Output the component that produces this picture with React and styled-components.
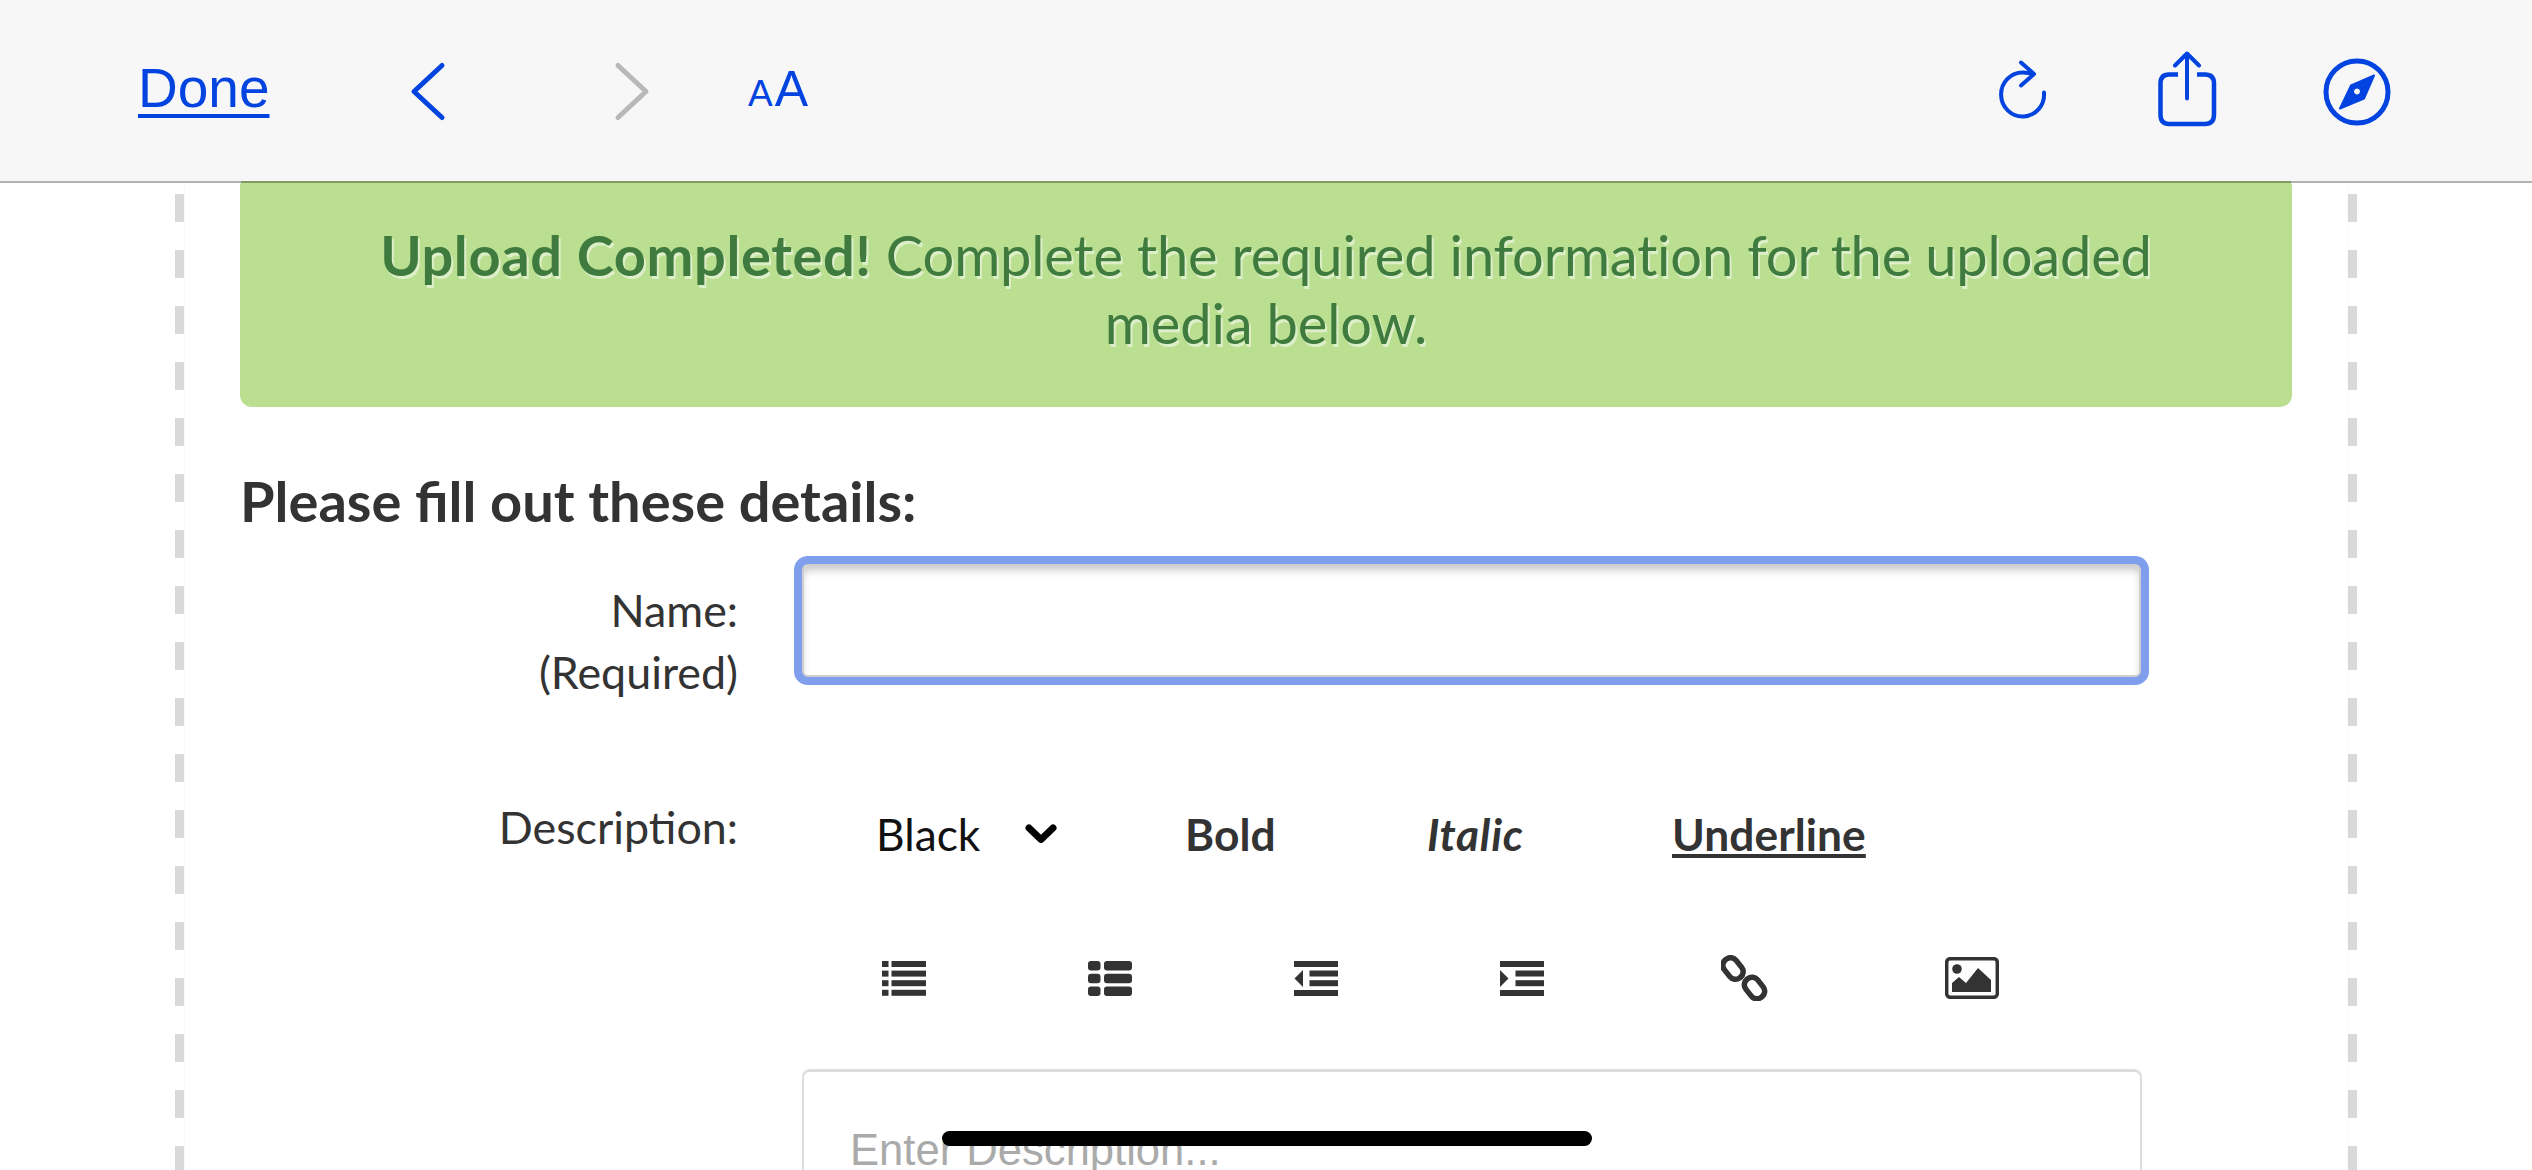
import React from "react";
import styled, { createGlobalStyle } from "styled-components";

const Global = createGlobalStyle`
  html, body { margin: 0; padding: 0; background: #fff; }
  * { box-sizing: border-box; }
`;
const BLUE = "#0343e0";
const Screen = styled.div`
  width: 2532px; height: 1170px; overflow: hidden; position: relative; background: #fff;
  font-family: Lato, "Liberation Sans", sans-serif; color: #333;
`;
const Toolbar = styled.header`
  height: 181px; background: #f7f7f7; display: flex; align-items: center; justify-content: space-between;
  padding: 0 139px 0 138px; position: relative; z-index: 1;
  box-shadow: 0 2px 0 rgba(0, 0, 0, 0.3);
  font-family: "Liberation Sans", Arial, sans-serif;
`;
const ToolGroup = styled.div` display: flex; align-items: center; `;
const DoneLink = styled.a`
  font-size: 55px; line-height: 64px; color: ${BLUE}; text-decoration: underline; text-decoration-thickness: 4px;
  text-underline-offset: 7px; margin-top: -6px; width: 133px; white-space: nowrap;
`;
const TextSize = styled.span`
  display: flex; align-items: baseline; color: ${BLUE}; margin-left: 96px; margin-top: -4px; line-height: 64px; height: 64px;
`;
const SmallA = styled.span` font-size: 37px; `;
const BigA = styled.span` font-size: 50px; margin-left: 2px; `;
const BarSvg = styled.svg`
  display: block; height: 80px; margin-left: ${(p) => p.$ml || 0}px; flex: none;
`;
const Body = styled.main` display: flex; padding-left: 175px; width: 2357px; height: 989px; `;
const Rail = styled.div`
  width: 9px; flex: none;
  background-image: linear-gradient(#d9d9d9 50%, transparent 50%);
  background-size: 9px 56px; background-position: 0 13px;
`;
const Panel = styled.section`
  flex: 1; min-width: 0; padding: 0 55px; border-left: 1px solid #f8f8f8; border-right: 1px solid #f8f8f8;
`;
const Banner = styled.div`
  height: 232px; margin-top: -6px; background: #bbdf91; border-radius: 12px; color: #3f7a3f; text-align: center;
  font-size: 56px; line-height: 68px; padding: 46px 130px 0; letter-spacing: -0.15px;
  text-shadow: 2px 3px 0 rgba(255, 255, 255, 0.5);
`;
const Strong = styled.strong` font-weight: 700; letter-spacing: 0.6px; `;
const Heading = styled.h2`
  margin: 62px 0 0; font-size: 56px; line-height: 64px; font-weight: 700; color: #333;
`;
const FormRow = styled.div`
  display: grid; grid-template-columns: 498px 1fr; column-gap: 56px; margin-top: ${(p) => p.$mt}px;
`;
const Label = styled.label`
  text-align: right; font-size: 44.800px; line-height: 62px; color: #333; padding-top: ${(p) => p.$pt || 0}px;
`;
const NameInput = styled.input`
  display: block; width: 1339px; height: 113px; margin: 8px; border: 2px solid #cfcfcf; border-radius: 6px; background: #fff;
  outline: none; box-shadow: 0 0 0 8px #7f9fec, inset 0 6px 8px -2px rgba(0, 0, 0, 0.22);
`;
const FormatRow = styled.div`
  display: grid; grid-template-columns: 309px 242px 245px auto; align-items: baseline; padding: 7px 0 0 82px;
  font-size: 44.300px; line-height: 62px;
`;
const ColorPick = styled.span` display: flex; align-items: center; color: #111; `;
const Chevron = styled.svg` display: block; width: 32px; height: 20px; margin-left: 45px; `;
const FormatBtn = styled.span`
  font-weight: ${(p) => p.$weight || 400};
  font-style: ${(p) => (p.$italic ? "italic" : "normal")};
  letter-spacing: ${(p) => (p.$italic ? "0.7px" : "0.05px")};
  text-decoration: ${(p) => (p.$underline ? "underline" : "none")};
  color: #333;
`;
const IconRow = styled.div`
  display: grid; grid-template-columns: 206px 206px 206px 221px 224px auto; align-items: center;
  padding-left: 88px; margin-top: 90px; height: 46px;
`;
const Icon = styled.svg` display: block; fill: #333; `;
const EditorBox = styled.textarea`
  display: block; resize: none; width: 1340px; height: 320px; margin: 68px 0 0 8px; padding: 52px 46px 0;
  border: 2px solid #ddd; border-top-width: 3px; border-radius: 8px; outline: none; background: #fff;
  font-family: "Liberation Sans", Arial, sans-serif; font-size: 43.600px; line-height: 52px;
  &::placeholder { color: #aaa; opacity: 1; }
`;
const HomeBar = styled.div`
  position: absolute; left: 942px; top: 1131px; width: 650px; height: 15px; border-radius: 8px; background: #000; z-index: 2;
`;

const Rows = ({ ys, h, sq, bx, bw, r = 0 }) => ys.map((y) => (
  <React.Fragment key={y}>
    <rect x="0" y={y} width={sq} height={h} rx={r} />
    <rect x={bx} y={y} width={bw} height={h} rx={r} />
  </React.Fragment>
));

export default function App() {
  return (
    <Screen>
      <Global />
      <Toolbar>
        <ToolGroup>
          <DoneLink>Done</DoneLink>
          <BarSvg $ml={138} width="40" viewBox="410 50.5 40 80" fill="none" stroke={BLUE} strokeWidth="5" strokeLinecap="round" strokeLinejoin="round">
            <path d="M443 65 L415 91 L443 117" />
          </BarSvg>
          <BarSvg $ml={163} width="40" viewBox="612 50.5 40 80" fill="none" stroke="#b8b8b8" strokeWidth="5" strokeLinecap="round" strokeLinejoin="round">
            <path d="M618 65 L646 91 L618 117" />
          </BarSvg>
          <TextSize><SmallA>A</SmallA><BigA>A</BigA></TextSize>
        </ToolGroup>
        <ToolGroup>
          <BarSvg width="50" viewBox="1998 50.5 50 80" fill="none" stroke={BLUE} strokeWidth="4" strokeLinecap="round" strokeLinejoin="round">
            <path d="M2044 92 A21.5 22 0 1 1 2023 72 L2033 73" />
            <path d="M2021 62 L2034 73.5 L2021 85" />
          </BarSvg>
          <BarSvg $ml={108} width="62" viewBox="2156 50.5 62 80" fill="none" stroke={BLUE} strokeWidth="4.5" strokeLinecap="round" strokeLinejoin="round">
            <path strokeLinecap="butt" d="M2178 74 H2169 Q2160.500 74 2160.500 83 V114 Q2160.500 123.500 2169 123.500 H2205 Q2214 123.500 2214 114 V83 Q2214 74 2205 74 H2197" />
            <path strokeWidth="4" d="M2187 98 V53 M2175 65 L2187 53 L2199 65" />
          </BarSvg>
          <BarSvg $ml={103} width="72" viewBox="2321 50.5 72 80" fill="none">
            <circle cx="2357" cy="91.500" r="31" stroke={BLUE} strokeWidth="5" />
            <path fillRule="evenodd" fill={BLUE} stroke={BLUE} strokeWidth="2" strokeLinejoin="round" d="M2374 75 L2364 98 L2340 108 L2351 85 Z M2357 87 a4 4 0 1 0 0.01 0 Z" />
          </BarSvg>
        </ToolGroup>
      </Toolbar>
      <Body>
        <Rail />
        <Panel>
          <Banner>
            <Strong>Upload Completed!</Strong> Complete the required information for the uploaded media below.
          </Banner>
          <Heading>Please fill out these details:</Heading>
          <FormRow $mt={23}>
            <Label $pt={23}>Name:<br />(Required)</Label>
            <NameInput />
          </FormRow>
          <FormRow $mt={93}>
            <Label>Description:</Label>
            <div>
              <FormatRow>
                <ColorPick>Black<Chevron viewBox="0 0 32 20" fill="none" stroke="#000" strokeWidth="7" strokeLinecap="round" strokeLinejoin="round"><path d="M4 4 L16 15.500 L28 4" /></Chevron></ColorPick>
                <FormatBtn $weight={700}>Bold</FormatBtn>
                <FormatBtn $weight={700} $italic>Italic</FormatBtn>
                <FormatBtn $weight={700} $underline>Underline</FormatBtn>
              </FormatRow>
              <IconRow>
                <Icon width="44" height="35" viewBox="0 0 44 35"><Rows ys={[0, 9.6, 19.2, 28.8]} h={6} sq={6.5} bx={9.5} bw={34.5} /></Icon>
                <Icon width="44" height="35" viewBox="0 0 44 35"><Rows ys={[0, 12.7, 25.400]} h={9.500} sq={12.500} bx={16} bw={28} r={3} /></Icon>
                <Icon width="44" height="35" viewBox="0 0 44 35">
                  <rect width="44" height="6" /><rect y="29" width="44" height="6" />
                  <rect x="15.500" y="9.500" width="28.500" height="6" /><rect x="15.500" y="19.200" width="28.500" height="6" />
                  <path d="M9 9 V26 L0.500 17.500 Z" />
                </Icon>
                <Icon width="44" height="35" viewBox="0 0 44 35">
                  <rect width="44" height="6" /><rect y="29" width="44" height="6" />
                  <rect x="15.500" y="9.500" width="28.500" height="6" /><rect x="15.500" y="19.200" width="28.500" height="6" />
                  <path d="M0 9 V26 L8.500 17.500 Z" />
                </Icon>
                <Icon width="47" height="46" viewBox="1721 953 47 46" style={{ fill: "none" }} stroke="#333" strokeWidth="5.500">
                  <rect x="1721.500" y="959" width="23" height="15" rx="7" transform="rotate(52 1733 966.500)" />
                  <rect x="1743" y="978.500" width="23" height="15" rx="7" transform="rotate(52 1754.500 986)" />
                </Icon>
                <Icon width="54" height="42" viewBox="1945 957 54 42">
                  <rect x="1946.700" y="958.700" width="50.600" height="38.600" rx="3.500" fill="none" stroke="#333" strokeWidth="3.500" />
                  <circle cx="1957" cy="969" r="4.800" />
                  <path d="M1952 983 L1959 977 L1966 983 L1978 968 L1991 980 V992 H1952 Z" />
                </Icon>
              </IconRow>
              <EditorBox placeholder="Enter Description..." />
            </div>
          </FormRow>
        </Panel>
        <Rail />
      </Body>
      <HomeBar />
    </Screen>
  );
}
